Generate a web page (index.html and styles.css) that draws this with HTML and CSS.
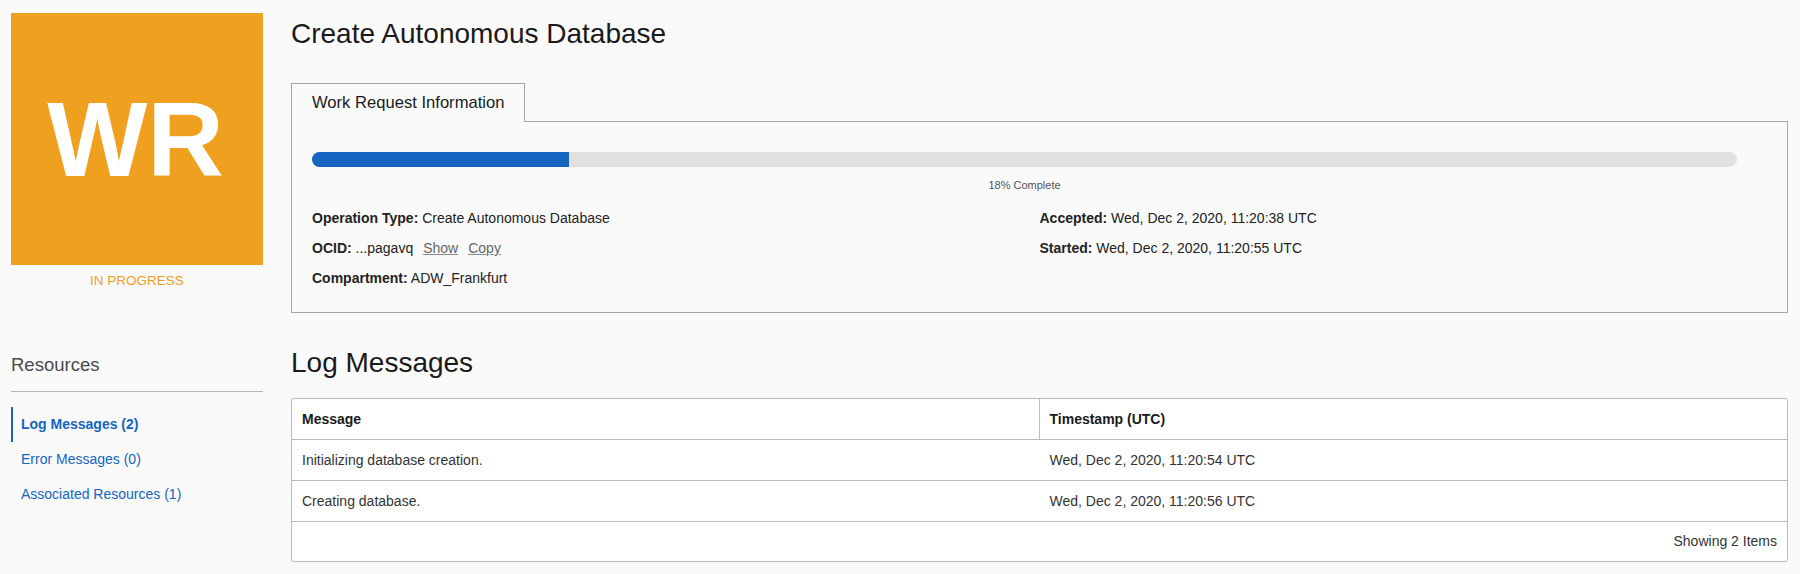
FILE: index.html
```html
<!DOCTYPE html>
<html lang="en">
<head>
<meta charset="utf-8">
<title>Create Autonomous Database</title>
<link rel="stylesheet" href="styles.css">
</head>
<body>
<div class="page">
  <aside class="sidebar">
    <div class="badge"><span class="badge-text">WR</span></div>
    <div class="state">IN PROGRESS</div>
    <div class="resources">
      <h2 class="resources-title">Resources</h2>
      <ul class="res-list">
        <li class="res-item active"><a class="res-link">Log Messages (2)</a></li>
        <li class="res-item"><a class="res-link">Error Messages (0)</a></li>
        <li class="res-item"><a class="res-link">Associated Resources (1)</a></li>
      </ul>
    </div>
  </aside>
  <main class="main">
    <h1 class="page-title">Create Autonomous Database</h1>
    <div class="tabs">
      <div class="tab">Work Request Information</div>
      <div class="tab-fill"></div>
    </div>
    <section class="panel">
      <div class="progress">
        <div class="track"><div class="fill" style="width:18%"></div></div>
        <div class="progress-label">18% Complete</div>
      </div>
      <div class="details">
        <div class="col">
          <div class="row"><span class="label">Operation Type:</span> Create Autonomous Database</div>
          <div class="row"><span class="label">OCID:</span> ...pagavq<a class="action">Show</a><a class="action">Copy</a></div>
          <div class="row"><span class="label">Compartment:</span> ADW_Frankfurt</div>
        </div>
        <div class="col">
          <div class="row"><span class="label">Accepted:</span> Wed, Dec 2, 2020, 11:20:38 UTC</div>
          <div class="row"><span class="label">Started:</span> Wed, Dec 2, 2020, 11:20:55 UTC</div>
        </div>
      </div>
    </section>
    <h2 class="section-title">Log Messages</h2>
    <div class="table">
      <div class="tr thead">
        <div class="th th-first">Message</div>
        <div class="th">Timestamp (UTC)</div>
      </div>
      <div class="tr">
        <div class="td">Initializing database creation.</div>
        <div class="td">Wed, Dec 2, 2020, 11:20:54 UTC</div>
      </div>
      <div class="tr">
        <div class="td">Creating database.</div>
        <div class="td">Wed, Dec 2, 2020, 11:20:56 UTC</div>
      </div>
      <div class="tfoot">Showing 2 Items</div>
    </div>
  </main>
</div>
</body>
</html>
```

FILE: styles.css
```css
* { box-sizing: border-box; }

html, body {
  margin: 0;
  padding: 0;
  background: #fafafa;
  font-family: "Liberation Sans", Arial, sans-serif;
  color: #333;
}

.page {
  display: flex;
  align-items: flex-start;
  gap: 28px;
  padding: 13px 12px 0 11px;
  width: 1800px;
  height: 574px;
  overflow: hidden;
}

/* Sidebar */
.sidebar {
  width: 252px;
  flex: none;
  display: flex;
  flex-direction: column;
}

.badge {
  width: 252px;
  height: 252px;
  background: #f0a01f;
  display: flex;
  align-items: center;
  justify-content: center;
}

.badge-text {
  color: #fff;
  font-weight: bold;
  font-size: 106px;
  line-height: 1;
  margin-left: -3px;
}

.state {
  margin-top: 8px;
  text-align: center;
  color: #f0a01f;
  font-size: 13.5px;
  line-height: 16px;
}

.resources {
  margin-top: 65px;
}

.resources-title {
  margin: 0;
  font-weight: 300;
  font-size: 18.5px;
  line-height: 22px;
  color: #4a4a4a;
}

.res-list {
  list-style: none;
  margin: 15px 0 0;
  padding: 15px 0 0;
  border-top: 1px solid #b4b4b4;
}

.res-item {
  height: 35px;
  line-height: 35px;
  padding-left: 8px;
  border-left: 2px solid transparent;
  font-size: 14px;
}

.res-item.active {
  border-left-color: #1565c0;
}

.res-item.active .res-link {
  font-weight: bold;
}

.res-link {
  color: #1565c0;
  text-decoration: none;
}

/* Main */
.main {
  flex: 1;
  min-width: 0;
  display: flex;
  flex-direction: column;
}

.page-title {
  margin: 5px 0 0;
  font-weight: normal;
  font-size: 28px;
  line-height: 32px;
  color: #1a1a1a;
}

.tabs {
  display: flex;
  margin-top: 33px;
}

.tab {
  border: 1px solid #a4a4a4;
  border-bottom: none;
  padding: 0 20px;
  height: 39px;
  line-height: 38px;
  font-size: 16.6px;
  color: #1a1a1a;
}

.tab-fill {
  flex: 1;
  border-bottom: 1px solid #a4a4a4;
}

.panel {
  border: 1px solid #a4a4a4;
  border-top: none;
  padding: 30px 20px 24px;
}

.progress {
  margin-right: 30px;
}

.track {
  height: 15px;
  background: #e1e1e1;
  border-radius: 8px;
  overflow: hidden;
}

.fill {
  height: 100%;
  background: #1565c0;
}

.progress-label {
  margin-top: 11px;
  text-align: center;
  font-size: 11px;
  line-height: 14px;
  color: #555;
}

.details {
  margin-top: 16px;
  display: grid;
  grid-template-columns: 1fr 1fr;
}

.row {
  font-size: 14px;
  line-height: 20px;
  color: #222;
  margin-bottom: 10px;
}

.row:last-child {
  margin-bottom: 0;
}

.label {
  font-weight: bold;
  color: #222;
}

.action {
  margin-left: 10px;
  color: #666;
  text-decoration: underline;
  text-decoration-color: #888;
}

.section-title {
  margin: 34px 0 0;
  font-weight: normal;
  font-size: 28px;
  line-height: 32px;
  color: #1a1a1a;
}

.table {
  margin-top: 19px;
  border: 1px solid #b7bbc2;
  border-radius: 3px;
  background: #fff;
  overflow: hidden;
}

.tr {
  display: grid;
  grid-template-columns: 1fr 1fr;
  border-bottom: 1px solid #b7bbc2;
}

.th, .td {
  height: 40px;
  line-height: 40px;
  padding: 0 10px;
  font-size: 14px;
  white-space: nowrap;
}

.th {
  font-weight: bold;
  color: #1a1a1a;
}

.th-first {
  border-right: 1px solid #b7bbc2;
}

.td {
  color: #333;
}

.tfoot {
  height: 39px;
  line-height: 39px;
  text-align: right;
  padding-right: 10px;
  font-size: 14px;
  color: #333;
}
```
